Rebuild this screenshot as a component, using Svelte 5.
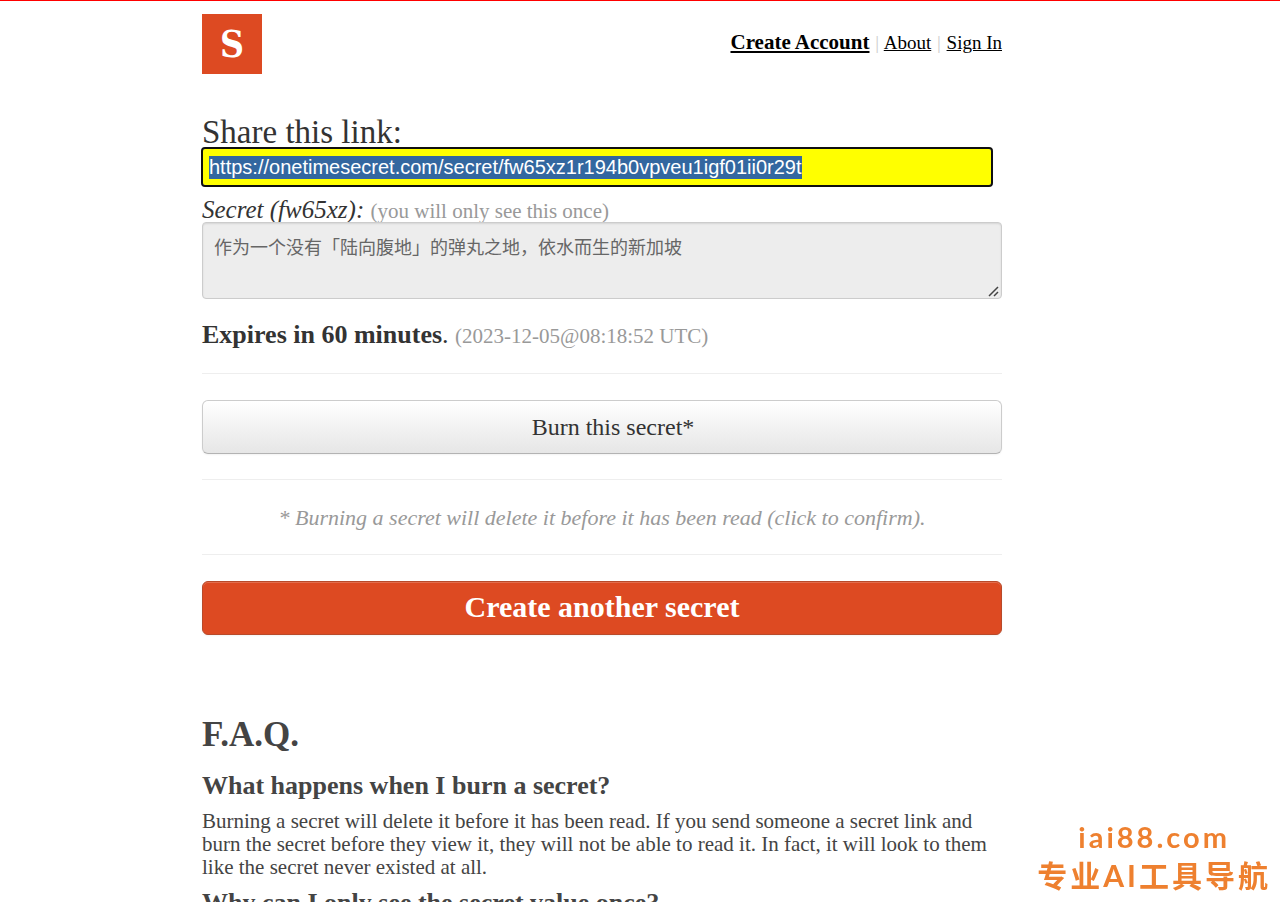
<script>
import { onMount } from 'svelte';

let link = "https://onetimesecret.com/secret/fw65xz1r194b0vpveu1igf01ii0r29t"
let secret = "作为一个没有「陆向腹地」的弹丸之地，依水而生的新加坡"
let linkInput;

let faq = [
  {
    question: "What happens when I burn a secret?",
    answer: "Burning a secret will delete it before it has been read. If you send someone a secret link and burn the secret before they view it, they will not be able to read it. In fact, it will look to them like the secret never existed at all."
  },
  {
    question: "Why can I only see the secret value once?",
    answer: ""
  }
]

onMount(() => {
  linkInput.focus();
  linkInput.select();
});
</script>

<div class="page">
  <div class="container">
    <header>
      <a class="logo" href="/">S</a>
      <nav>
        <a class="strong" href="/signup">Create Account</a>
        <span class="sep">|</span>
        <a href="/about">About</a>
        <span class="sep">|</span>
        <a href="/signin">Sign In</a>
      </nav>
    </header>

    <main>
      <label class="shareLabel" for="secreturi">Share this link:</label>
      <input id="secreturi" type="text" readonly bind:this={linkInput} value={link} />

      <label class="secretLabel" for="secretvalue"><em>Secret (fw65xz):</em> <small>(you will only see this once)</small></label>
      <textarea id="secretvalue" readonly value={secret}></textarea>

      <p class="expires"><strong>Expires in 60 minutes</strong>. <small>(2023-12-05@08:18:52 UTC)</small></p>
      <hr>
      <button class="btn burn" type="button">Burn this secret*</button>
      <hr>
      <p class="note"><em>* Burning a secret will delete it before it has been read (click to confirm).</em></p>
      <hr>
      <a class="btn create" href="/">Create another secret</a>
    </main>

    <section class="faq">
      <h2>F.A.Q.</h2>
      {#each faq as item}
        <h3>{item.question}</h3>
        {#if item.answer}
          <p>{item.answer}</p>
        {/if}
      {/each}
    </section>
  </div>

  <div class="badge">
    <span class="site">iai88.com</span>
    <span class="tagline">专业AI工具导航</span>
  </div>
</div>

<style>
:global(body) {
  margin: 0;
  background: #fff;
}
.page {
  border-top: 1px solid #f00;
  padding-right: 76px;
  height: 100vh;
  box-sizing: border-box;
  overflow: hidden;
  color: #333;
  font-family: Georgia, "Liberation Serif", serif;
}
.container {
  max-width: 800px;
  margin: 0 auto;
}
header {
  display: flex;
  justify-content: space-between;
  padding-top: 13px;
}
.logo {
  width: 60px;
  height: 60px;
  background: #dd4a22;
  color: #fff;
  font: bold 37px/60px "DejaVu Serif Condensed", "DejaVu Serif", serif;
  text-align: center;
  text-decoration: none;
}
nav {
  font-size: 19px;
  line-height: 24px;
  padding-top: 16px;
}
nav a {
  color: #000;
}
.strong {
  font-size: 21px;
  font-weight: bold;
}
.sep {
  margin: 0 1px;
  color: #ccc;
}
main {
  display: flex;
  flex-direction: column;
}
label {
  display: block;
}
.shareLabel {
  font-size: 33px;
  line-height: 34px;
  margin-top: 41px;
}
input {
  box-sizing: border-box;
  height: 36px;
  margin: 0 11px 0 1px;
  padding: 0 6px;
  border: 0;
  border-radius: 2px;
  outline: 2px solid #101010;
  background: #ff0;
  color: #333;
  font: 20px "Liberation Sans", Arial, sans-serif;
}
input::selection {
  background: #3367a0;
  color: #fff;
}
.secretLabel {
  font-size: 25px;
  line-height: 24px;
  margin-top: 13px;
}
small {
  color: #999;
  font-size: 21px;
  line-height: 1;
}
textarea {
  box-sizing: border-box;
  height: 77px;
  margin: 0;
  padding: 11px;
  border: 1px solid #ccc;
  border-radius: 4px;
  box-shadow: inset 0 1px 2px rgba(0, 0, 0, 0.1);
  background: #ededed;
  color: #666;
  font: 18px/24px "Noto Sans CJK SC", sans-serif;
  resize: both;
}
textarea::-webkit-resizer {
  background: url("data:image/svg+xml,%3Csvg xmlns='http://www.w3.org/2000/svg' width='15' height='15'%3E%3Cpath d='M3 13L12 4M8 13L12 9' stroke='%23444' stroke-width='1.5'/%3E%3C/svg%3E") no-repeat;
}
.expires {
  margin: 22px 0 0;
  font-size: 26px;
  line-height: 27px;
}
hr {
  width: 100%;
  margin: 25px 0 26px;
  border: 0;
  border-top: 1px solid #eee;
}
.btn {
  box-sizing: border-box;
  height: 54px;
  border-radius: 6px;
  text-align: center;
}
.burn {
  padding: 0 0 0 22px;
  border: 1px solid #ccc;
  border-bottom-color: #b3b3b3;
  background: linear-gradient(#fff, #e6e6e6);
  box-shadow: inset 0 1px 0 rgba(255, 255, 255, 0.2), 0 1px 2px rgba(0, 0, 0, 0.05);
  color: #333;
  font: 24px Georgia, "Liberation Serif", serif;
}
.note {
  margin: 0;
  color: #999;
  font-size: 22px;
  line-height: 23px;
  text-align: center;
}
.create {
  border: 1px solid #b84a2a;
  background: #dd4a22;
  box-shadow: inset 0 1px 0 rgba(255, 255, 255, 0.2), 0 1px 2px rgba(0, 0, 0, 0.05);
  color: #fff;
  font-size: 30px;
  font-weight: bold;
  line-height: 50px;
  text-decoration: none;
}
.faq {
  margin-top: 80px;
  color: #444;
}
h2 {
  margin: 0;
  font-size: 35px;
  line-height: 40px;
}
h3 {
  margin: 0;
  font-size: 26px;
  line-height: 28px;
}
h2 + h3 {
  margin-top: 17px;
}
.faq p {
  margin: 10px 0;
  font-size: 21px;
  line-height: 23px;
}
.badge {
  position: fixed;
  right: 9px;
  bottom: 9px;
  display: flex;
  flex-direction: column;
  align-items: center;
  color: #ee802f;
  font-family: Lato, "Noto Sans CJK SC", sans-serif;
  font-weight: bold;
}
.site {
  font-size: 29px;
  line-height: 40px;
  letter-spacing: 3px;
}
.tagline {
  font-size: 30px;
  line-height: 36px;
  letter-spacing: 3px;
}
</style>
